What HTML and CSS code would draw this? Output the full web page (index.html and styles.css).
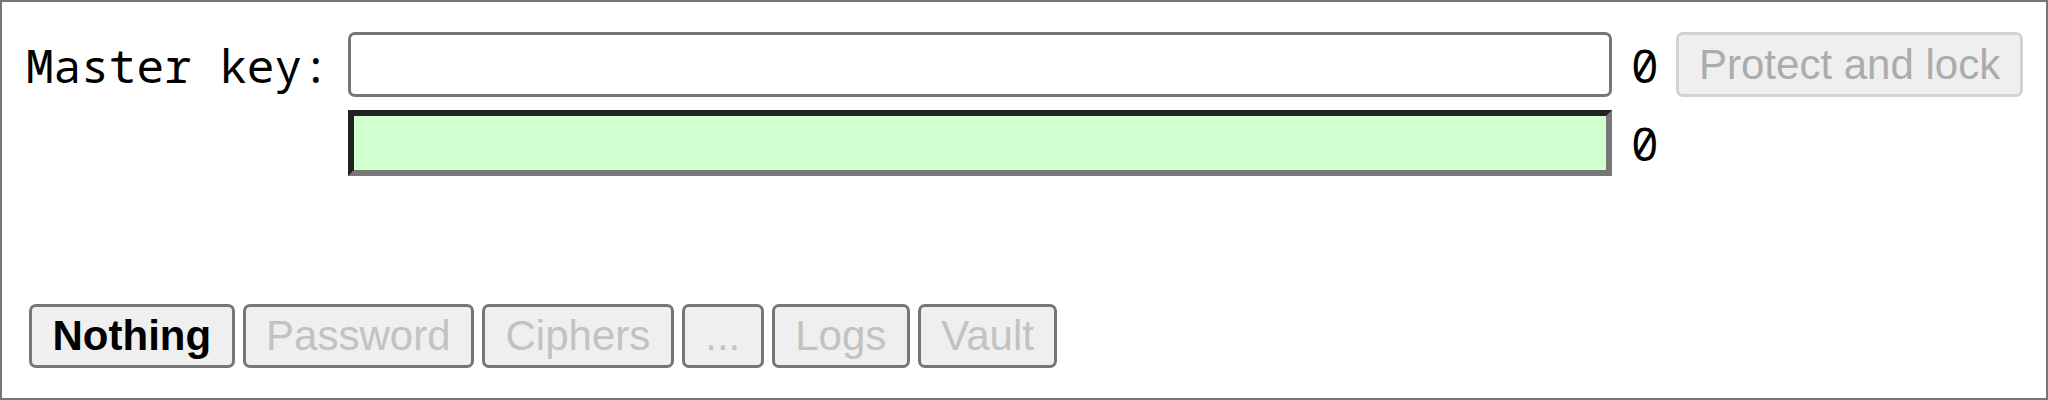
FILE: index.html
```html
<!DOCTYPE html>
<html>
<head>
<meta charset="utf-8">
<link rel="stylesheet" href="styles.css">
</head>
<body>
<div class="page">
  <div class="keygrid">
    <label class="keylabel" for="mk">Master key:</label>
    <input id="mk" class="keyinput" type="password">
    <span class="count">0</span>
    <button class="protect" disabled>Protect and lock</button>
    <span class="spacer"></span>
    <input class="confirm" type="password">
    <span class="count">0</span>
  </div>
  <div class="tabs">
    <button class="tab active">Nothing</button>
    <button class="tab">Password</button>
    <button class="tab">Ciphers</button>
    <button class="tab">...</button>
    <button class="tab">Logs</button>
    <button class="tab">Vault</button>
  </div>
</div>
</body>
</html>
```

FILE: styles.css
```css
html, body {
  margin: 0;
  padding: 0;
  background: #fff;
}

.page {
  box-sizing: border-box;
  width: 2048px;
  height: 400px;
  border: 2px solid #777;
  padding: 30px 0 0 24px;
  font-family: "Liberation Sans", Arial, sans-serif;
}

.keygrid {
  display: grid;
  grid-template-columns: 322px 1264px 64px auto;
  grid-template-rows: 65px 66px;
  row-gap: 13px;
  align-items: center;
}

.keylabel {
  font-family: "Noto Sans Mono", "DejaVu Sans Mono", monospace;
  font-size: 46px;
  color: #000;
  white-space: nowrap;
}

.keyinput {
  box-sizing: border-box;
  width: 100%;
  height: 65px;
  margin: 0;
  border: 3px solid #767676;
  border-radius: 7px;
  background: #fff;
  outline: none;
}

.confirm {
  box-sizing: border-box;
  width: 100%;
  height: 66px;
  margin: 0;
  border-width: 6px;
  border-style: solid;
  border-color: #222 #777 #777 #222;
  border-radius: 0;
  background: #d0ffd0;
  outline: none;
}

.count {
  font-family: "Noto Sans Mono", "DejaVu Sans Mono", monospace;
  font-size: 46px;
  color: #000;
  padding-left: 19px;
}

.protect {
  box-sizing: border-box;
  height: 65px;
  margin: 0;
  padding: 0 20px;
  font-family: "Liberation Sans", Arial, sans-serif;
  font-size: 42px;
  color: #acacac;
  background: #efefef;
  border: 3px solid #d2d2d2;
  border-radius: 7px;
  justify-self: start;
}

.tabs {
  display: flex;
  gap: 8px;
  margin-top: 128px;
  margin-left: 3px;
}

.tab {
  box-sizing: border-box;
  height: 64px;
  margin: 0;
  padding: 0 20.5px;
  font-family: "Liberation Sans", Arial, sans-serif;
  font-size: 42px;
  color: #c2c2c2;
  background: #efefef;
  border: 3px solid #767676;
  border-radius: 7px;
}

.tab.active {
  color: #000;
  font-weight: bold;
}
```
